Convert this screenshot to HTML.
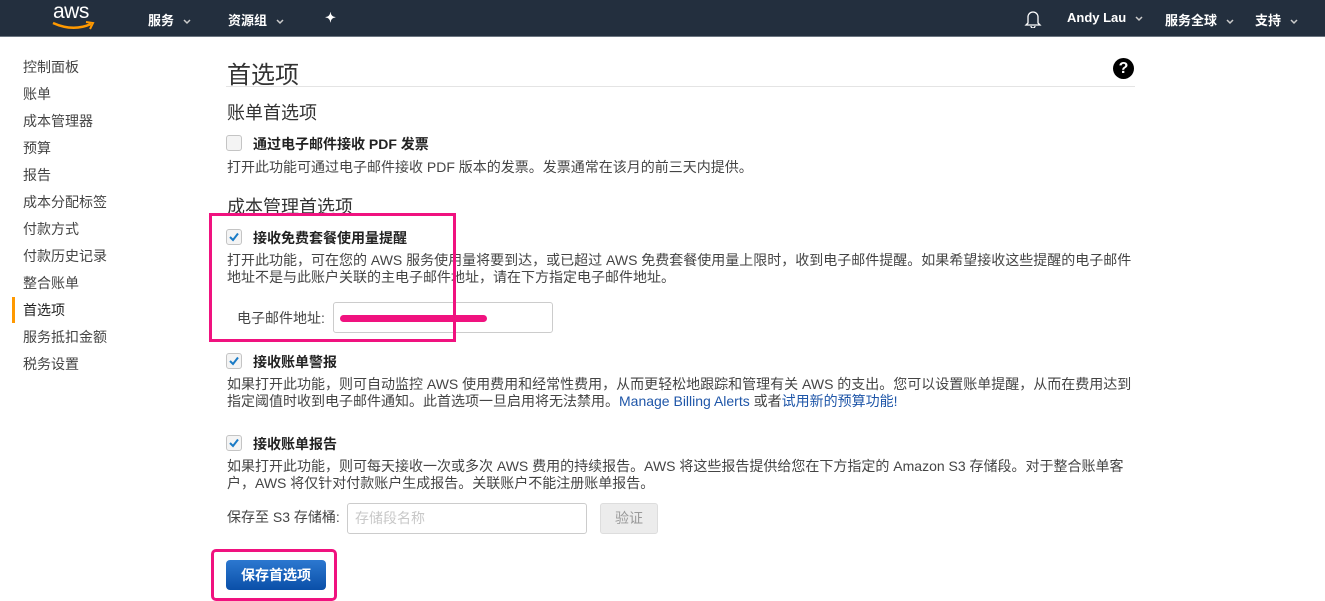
<!DOCTYPE html>
<html><head><meta charset="utf-8"><style>
*{margin:0;padding:0;box-sizing:border-box}
body{width:1325px;height:601px;overflow:hidden;background:#fff;font-family:"Liberation Sans","Noto Sans CJK SC",sans-serif;color:#333;position:relative}
.a{position:absolute;white-space:nowrap}
.hd{position:absolute;left:0;top:0;width:1325px;height:37px;background:#232f3e;border-bottom:1px solid #6b7580}
.hd .a{color:#fff;font-weight:bold;font-size:13px;top:10px}
.car{display:inline-block;margin-left:9px;vertical-align:middle}
.nav{font-size:14px;color:#444;left:23px}
.t13{font-size:14px;color:#444;line-height:17px}
.cb{position:absolute;width:16px;height:16px;border:1px solid #c4c4c4;border-radius:3px;background:#f4f4f4}
.lbl{font-size:14px;font-weight:bold;color:#222}
.inp{position:absolute;border:1px solid #ccc;border-radius:3px;background:#fff}
.pink{position:absolute;border:3px solid #f0127f}
</style></head><body>
<div class="hd">
 <div class="a" style="left:53px;top:0px;font-size:21px;font-weight:normal;letter-spacing:-0.5px">aws</div>
 <svg class="a" style="left:51px;top:21px" width="44" height="10" viewBox="0 0 44 10"><path d="M2 2 Q22 11 40 3" stroke="#f90" stroke-width="2.5" fill="none"/><path d="M35 1 L42 2 L39 8" stroke="#f90" stroke-width="2" fill="none"/></svg>
 <div class="a" style="left:148px">服务<svg class="car" width="8" height="6"><path d="M1 1 L4 4 L7 1" stroke="#ccc" stroke-width="1.5" fill="none"/></svg></div>
 <div class="a" style="left:228px">资源组<svg class="car" width="8" height="6"><path d="M1 1 L4 4 L7 1" stroke="#ccc" stroke-width="1.5" fill="none"/></svg></div>
 <div class="a" style="left:325px;font-size:13px">✦</div>
 <svg class="a" style="left:1024px;top:9px" width="18" height="19" viewBox="0 0 18 19"><path d="M4 14 V8 a5 5 0 0 1 10 0 V14 L16 16 H2 Z M7 17 a2 2 0 0 0 4 0" stroke="#fff" stroke-width="1.3" fill="none"/></svg>
 <div class="a" style="left:1067px">Andy Lau<svg class="car" width="8" height="6"><path d="M1 1 L4 4 L7 1" stroke="#ccc" stroke-width="1.5" fill="none"/></svg></div>
 <div class="a" style="left:1165px">服务全球<svg class="car" width="8" height="6"><path d="M1 1 L4 4 L7 1" stroke="#ccc" stroke-width="1.5" fill="none"/></svg></div>
 <div class="a" style="left:1255px">支持<svg class="car" width="8" height="6"><path d="M1 1 L4 4 L7 1" stroke="#ccc" stroke-width="1.5" fill="none"/></svg></div>
</div>

<div class="a nav" style="top:57px">控制面板</div>
<div class="a nav" style="top:84px">账单</div>
<div class="a nav" style="top:111px">成本管理器</div>
<div class="a nav" style="top:138px">预算</div>
<div class="a nav" style="top:165px">报告</div>
<div class="a nav" style="top:192px">成本分配标签</div>
<div class="a nav" style="top:219px">付款方式</div>
<div class="a nav" style="top:246px">付款历史记录</div>
<div class="a nav" style="top:273px">整合账单</div>
<div class="a" style="left:12px;top:297px;width:3px;height:26px;background:#f90"></div>
<div class="a nav" style="top:300px;color:#222">首选项</div>
<div class="a nav" style="top:327px">服务抵扣金额</div>
<div class="a nav" style="top:354px">税务设置</div>

<div class="a" style="left:227px;top:55px;font-size:24px;color:#333">首选项</div>
<div class="a" style="left:1113px;top:58px;width:21px;height:21px;border-radius:50%;background:#000;color:#fff;font-weight:bold;font-size:16px;text-align:center;line-height:21px">?</div>
<div class="a" style="left:226px;top:86px;width:909px;height:1px;background:#e4e4e4"></div>

<div class="a" style="left:227px;top:99px;font-size:18px;color:#333">账单首选项</div>
<div class="cb" style="left:226px;top:135px"></div>
<div class="a lbl" style="left:253px;top:134px">通过电子邮件接收 PDF 发票</div>
<div class="a t13" style="left:227px;top:159px">打开此功能可通过电子邮件接收 PDF 版本的发票。发票通常在该月的前三天内提供。</div>

<div class="a" style="left:227px;top:193px;font-size:18px;color:#333">成本管理首选项</div>
<div class="cb" style="left:226px;top:229px"><svg width="14" height="14" viewBox="0 0 14 14"><path d="M3 7 L6 10 L11 3.5" stroke="#1a7bc6" stroke-width="2" fill="none"/></svg></div>
<div class="a lbl" style="left:253px;top:228px">接收免费套餐使用量提醒</div>
<div class="a t13" style="left:227px;top:252px">打开此功能，可在您的 AWS 服务使用量将要到达，或已超过 AWS 免费套餐使用量上限时，收到电子邮件提醒。如果希望接收这些提醒的电子邮件<br>地址不是与此账户关联的主电子邮件地址，请在下方指定电子邮件地址。</div>
<div class="a t13" style="left:237px;top:310px">电子邮件地址:</div>
<div class="inp" style="left:333px;top:302px;width:220px;height:31px"></div>
<div class="a" style="left:340px;top:315px;width:147px;height:7px;border-radius:4px;background:#f0127f"></div>
<div class="pink" style="left:209px;top:213px;width:247px;height:129px"></div>

<div class="cb" style="left:226px;top:353px"><svg width="14" height="14" viewBox="0 0 14 14"><path d="M3 7 L6 10 L11 3.5" stroke="#1a7bc6" stroke-width="2" fill="none"/></svg></div>
<div class="a lbl" style="left:253px;top:352px">接收账单警报</div>
<div class="a t13" style="left:227px;top:376px">如果打开此功能，则可自动监控 AWS 使用费用和经常性费用，从而更轻松地跟踪和管理有关 AWS 的支出。您可以设置账单提醒，从而在费用达到<br>指定阈值时收到电子邮件通知。此首选项一旦启用将无法禁用。<span style="color:#1f56a8">Manage Billing Alerts</span> 或者<span style="color:#1f56a8">试用新的预算功能!</span></div>

<div class="cb" style="left:226px;top:435px"><svg width="14" height="14" viewBox="0 0 14 14"><path d="M3 7 L6 10 L11 3.5" stroke="#1a7bc6" stroke-width="2" fill="none"/></svg></div>
<div class="a lbl" style="left:253px;top:434px">接收账单报告</div>
<div class="a t13" style="left:227px;top:458px">如果打开此功能，则可每天接收一次或多次 AWS 费用的持续报告。AWS 将这些报告提供给您在下方指定的 Amazon S3 存储段。对于整合账单客<br>户，AWS 将仅针对付款账户生成报告。关联账户不能注册账单报告。</div>
<div class="a t13" style="left:227px;top:509px">保存至 S3 存储桶:</div>
<div class="inp" style="left:347px;top:503px;width:240px;height:31px"></div>
<div class="a t13" style="left:355px;top:510px;color:#c8c8c8">存储段名称</div>
<div class="a" style="left:600px;top:503px;width:58px;height:31px;border:1px solid #ddd;border-radius:3px;background:#ececec;color:#999;font-size:14px;text-align:center;line-height:29px">验证</div>

<div class="a" style="left:226px;top:560px;width:100px;height:30px;border-radius:4px;background:linear-gradient(#2c78d0,#0a4fa8);color:#fff;font-weight:bold;font-size:14px;text-align:center;line-height:30px">保存首选项</div>
<div class="pink" style="left:211px;top:549px;width:126px;height:52px;border-radius:5px"></div>
</body></html>
